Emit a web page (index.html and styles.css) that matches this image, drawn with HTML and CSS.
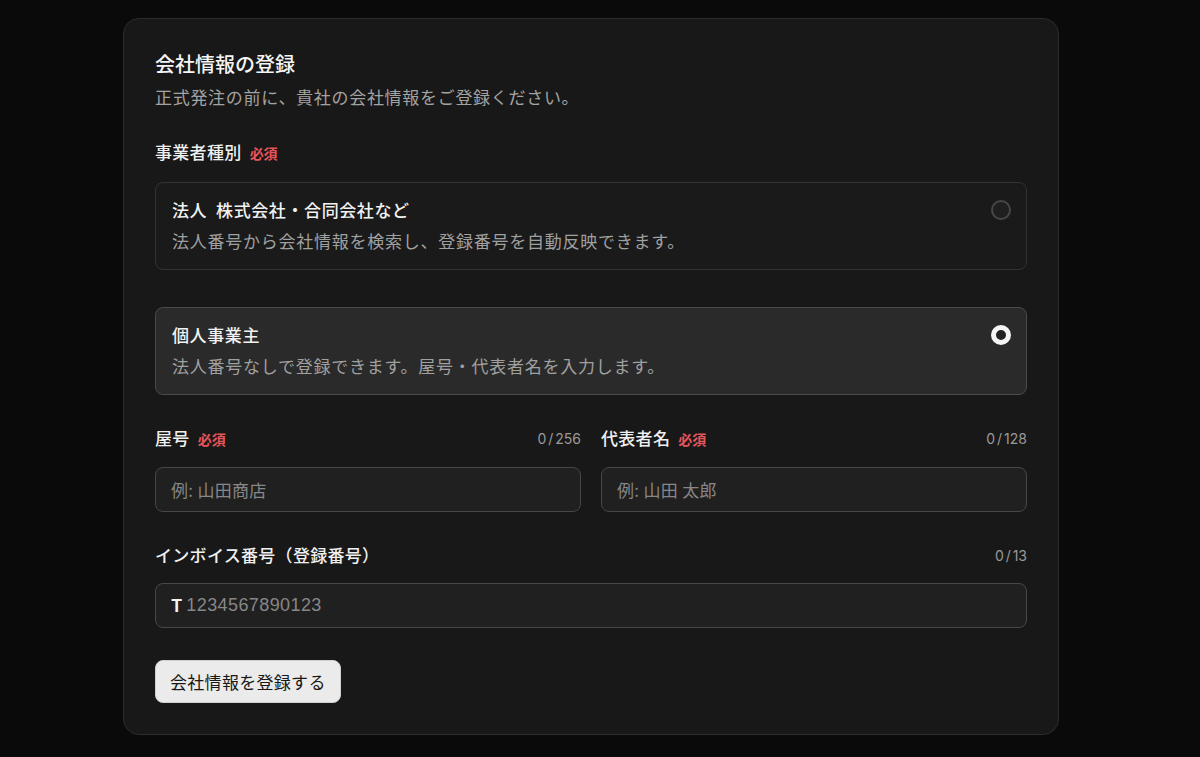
FILE: index.html
```html
<!DOCTYPE html>
<html lang="ja">
<head>
    <meta charset="UTF-8">
    <meta name="viewport" content="width=device-width, initial-scale=1.0">
    <title>会社情報の登録</title>
    <link rel="stylesheet" href="styles.css">
</head>
<body>
    <div class="card">
        <h1 class="card-title">会社情報の登録</h1>
        <p class="card-subtitle">正式発注の前に、貴社の会社情報をご登録ください。</p>

        <div class="field-label group-label">事業者種別 <span class="required">必須</span></div>

        <div class="options">
            <label class="option">
                <div class="option-body">
                    <div class="option-title">法人&nbsp;&nbsp;株式会社・合同会社など</div>
                    <div class="option-desc">法人番号から会社情報を検索し、登録番号を自動反映できます。</div>
                </div>
                <span class="radio"></span>
            </label>
            <label class="option selected">
                <div class="option-body">
                    <div class="option-title">個人事業主</div>
                    <div class="option-desc">法人番号なしで登録できます。屋号・代表者名を入力します。</div>
                </div>
                <span class="radio"></span>
            </label>
        </div>

        <div class="field-row">
            <div class="field">
                <div class="field-head">
                    <span class="field-label">屋号 <span class="required">必須</span></span>
                    <span class="counter">0 / 256</span>
                </div>
                <input class="text-input" type="text" placeholder="例: 山田商店">
            </div>
            <div class="field">
                <div class="field-head">
                    <span class="field-label">代表者名 <span class="required">必須</span></span>
                    <span class="counter">0 / 128</span>
                </div>
                <input class="text-input" type="text" placeholder="例: 山田 太郎">
            </div>
        </div>

        <div class="field invoice">
            <div class="field-head">
                <span class="field-label">インボイス番号（登録番号）</span>
                <span class="counter">0 / 13</span>
            </div>
            <div class="prefix-input">
                <span class="prefix">T</span>
                <input type="text" placeholder="1234567890123">
            </div>
        </div>

        <button class="submit-btn">会社情報を登録する</button>
    </div>
</body>
</html>
```

FILE: styles.css
```css
body {
    margin: 0;
    background: #0a0a0a;
    font-family: "Noto Sans CJK JP", "Noto Sans", "Liberation Sans", sans-serif;
    color: #f2f2f2;
}
.card {
    width: 872px;
    margin: 18px 0 0 123px;
    padding: 31px;
    background: #181818;
    border: 1px solid #2c2c2c;
    border-radius: 16px;
}
.card-title {
    margin: 0;
    font-size: 20px;
    line-height: 28px;
    font-weight: 500;
    color: #f5f5f5;
}
.card-subtitle {
    margin: 6px 0 0;
    font-size: 17px;
    line-height: 26px;
    letter-spacing: 0.7px;
    color: #a3a3a3;
}
.field-label {
    font-size: 17px;
    line-height: 24px;
    font-weight: 500;
    letter-spacing: 0.3px;
    color: #f0f0f0;
}
.group-label {
    margin-top: 30px;
}
.required {
    font-size: 14px;
    font-weight: 700;
    letter-spacing: 0;
    color: #e5555b;
    margin-left: 4px;
}
.options {
    display: flex;
    flex-direction: column;
    gap: 37px;
    margin-top: 17px;
}
.option {
    display: flex;
    align-items: flex-start;
    justify-content: space-between;
    padding: 15px 15px 16px 16px;
    background: #1a1a1a;
    border: 1px solid #333;
    border-radius: 8px;
    cursor: pointer;
}
.option.selected {
    background: #2a2a2a;
    border-color: #4a4a4a;
}
.option-title {
    font-size: 17px;
    line-height: 24px;
    font-weight: 500;
    letter-spacing: 0.6px;
    color: #f2f2f2;
}
.option-desc {
    margin-top: 7px;
    font-size: 17px;
    line-height: 24px;
    letter-spacing: 0.75px;
    color: #a0a0a0;
}
.radio {
    width: 16px;
    height: 16px;
    margin-top: 2px;
    border: 2px solid #474747;
    border-radius: 50%;
    background: #1f1f1f;
}
.option.selected .radio {
    width: 10px;
    height: 10px;
    border: 5px solid #f5f5f5;
    background: #222;
}
.field-row {
    display: grid;
    grid-template-columns: 1fr 1fr;
    gap: 20px;
    margin-top: 31px;
}
.invoice {
    margin-top: 31px;
}
.field-head {
    display: flex;
    justify-content: space-between;
    align-items: center;
    margin-bottom: 16px;
}
.counter {
    font-size: 14px;
    color: #9a9a9a;
    font-family: "Inter", "Liberation Sans", sans-serif;
    word-spacing: -2px;
}
.text-input,
.prefix-input {
    box-sizing: border-box;
    width: 100%;
    height: 45px;
    background: #202020;
    border: 1px solid #474747;
    border-radius: 8px;
    color: #f0f0f0;
}
.text-input {
    padding: 0 15px;
    font-family: inherit;
    font-size: 17px;
    letter-spacing: 0.3px;
}
.prefix-input {
    display: flex;
    align-items: center;
    padding: 0 15px;
    gap: 4px;
}
.prefix {
    font-family: "Inter", "Liberation Sans", sans-serif;
    font-size: 17px;
    font-weight: 700;
    color: #f5f5f5;
}
.prefix-input input {
    flex: 1;
    background: transparent;
    border: none;
    outline: none;
    color: #f0f0f0;
    font-family: "Liberation Sans", sans-serif;
    font-size: 18px;
    letter-spacing: 0.4px;
    padding: 0;
}
.text-input::placeholder,
.prefix-input input::placeholder {
    color: #878787;
}
.submit-btn {
    margin-top: 32px;
    height: 43px;
    padding: 0 14px;
    background: #ebebeb;
    color: #181818;
    border: 1px solid #d0d0d0;
    border-radius: 8px;
    font-family: inherit;
    font-size: 17px;
    letter-spacing: 0.3px;
    cursor: pointer;
}
```
